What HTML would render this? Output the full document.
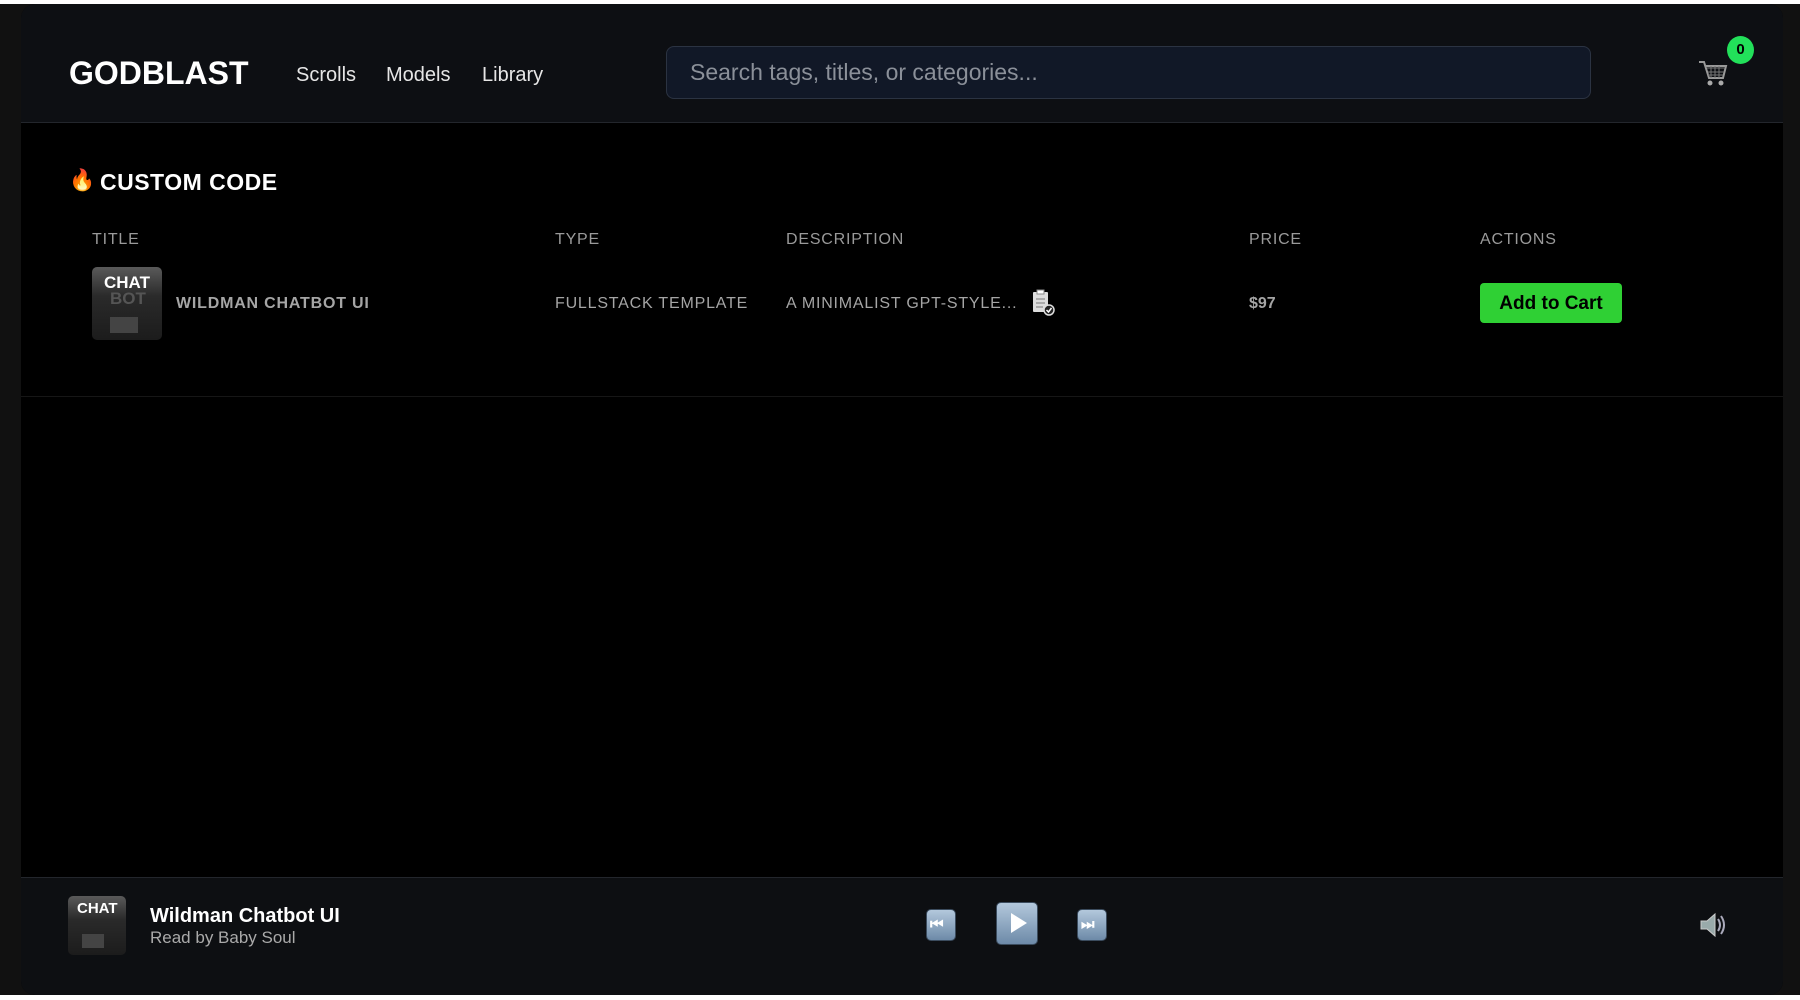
<!DOCTYPE html>
<html><head><meta charset="utf-8"><style>
*{margin:0;padding:0;box-sizing:border-box}
body{width:1800px;height:1000px;background:#111;font-family:"Liberation Sans",sans-serif;position:relative;overflow:hidden}
.abs{position:absolute}
.top{left:0;top:0;width:1800px;height:4px;background:#fff}
.bot{left:0;top:995px;width:1800px;height:5px;background:#fff}
.app{left:21px;top:4px;width:1762px;height:991px;background:#000;border-radius:14px;overflow:hidden}
.hdr{left:0;top:0;width:1762px;height:119px;background:#0d0f13;border-bottom:1px solid #23262c}
.ftr{left:0;top:873px;width:1762px;height:118px;background:#0d0f12;border-top:1px solid #23262c}
.t{white-space:nowrap;line-height:1}
.th{font-size:16px;color:#9a9a9a;letter-spacing:.8px;top:228px}
.td{font-size:16px;color:#a5a5a5;letter-spacing:.8px;top:292px}
.thumb{background:linear-gradient(#5a5a5a,#2a2a2a 40%,#1c1c1c);border-radius:5px;overflow:hidden}
.thumb span{position:absolute;color:#fff;font-weight:bold}
.ctl{background:linear-gradient(#b3c8dc,#6d8aa8);border-radius:5px;border:1px solid #3b4c5e}
</style></head><body>
<div class="abs top"></div>
<div class="abs app">
 <div class="abs hdr">
  <div class="abs t" style="left:48px;top:53px;font-size:32px;font-weight:bold;color:#fff">GODBLAST</div>
  <div class="abs t" style="left:275px;top:61px;font-size:20px;color:#e6e6e6">Scrolls</div>
  <div class="abs t" style="left:365px;top:61px;font-size:20px;color:#e6e6e6">Models</div>
  <div class="abs t" style="left:461px;top:61px;font-size:20px;color:#e6e6e6">Library</div>
  <div class="abs" style="left:645px;top:42px;width:925px;height:53px;background:#111827;border:1px solid #2b3342;border-radius:8px"></div>
  <div class="abs t" style="left:669px;top:57px;font-size:23px;color:#8b9099">Search tags, titles, or categories...</div>
  <svg class="abs" style="left:1676px;top:52px" width="32" height="34" viewBox="0 0 32 34"><path d="M2 6h5l5 16h14l3-12H9" fill="none" stroke="#999" stroke-width="2"/><path d="M10 12h18M11 16h16M11 19h15M14 10v12M18 10v12M22 10v12" stroke="#777" stroke-width="1"/><circle cx="13" cy="27" r="2.5" fill="#aaa"/><circle cx="24" cy="27" r="2.5" fill="#aaa"/></svg>
  <div class="abs" style="left:1706px;top:32px;width:27px;height:28px;border-radius:50%;background:#22e05a;color:#000;font-weight:bold;font-size:15px;text-align:center;line-height:28px">0</div>
 </div>
 <div class="abs t" style="left:48px;top:166px;font-size:21px">🔥</div>
 <div class="abs t" style="left:79px;top:167px;font-size:23px;font-weight:bold;color:#fff;letter-spacing:.5px">CUSTOM CODE</div>
 <div class="abs t th" style="left:71px">TITLE</div>
 <div class="abs t th" style="left:534px">TYPE</div>
 <div class="abs t th" style="left:765px">DESCRIPTION</div>
 <div class="abs t th" style="left:1228px">PRICE</div>
 <div class="abs t th" style="left:1459px">ACTIONS</div>
 <div class="abs thumb" style="left:71px;top:263px;width:70px;height:73px"><span style="left:12px;top:6px;font-size:17px">CHAT</span><span style="left:18px;top:22px;font-size:17px;color:#555">BOT</span><div class="abs" style="left:18px;top:50px;width:28px;height:16px;background:#444"></div></div>
 <div class="abs t td" style="left:155px;font-weight:bold">WILDMAN CHATBOT UI</div>
 <div class="abs t td" style="left:534px">FULLSTACK TEMPLATE</div>
 <div class="abs t td" style="left:765px">A MINIMALIST GPT-STYLE...</div>
 <svg class="abs" style="left:1010px;top:285px" width="26" height="28" viewBox="0 0 26 28"><rect x="2" y="3" width="15" height="20" rx="1" fill="#ddd"/><rect x="6" y="1" width="7" height="4" fill="#fff" stroke="#888"/><path d="M5 10h9M5 14h9M5 18h7" stroke="#777"/><circle cx="18" cy="21" r="5" fill="#222" stroke="#ddd" stroke-width="1.5"/><path d="M15.5 21l2 2 3-4" stroke="#fff" fill="none" stroke-width="1.5"/></svg>
 <div class="abs t td" style="left:1228px;font-weight:bold;letter-spacing:0">$97</div>
 <div class="abs" style="left:1459px;top:279px;width:142px;height:40px;background:#2fd034;border-radius:4px;color:#000;font-weight:bold;font-size:19px;text-align:center;line-height:41px">Add to Cart</div>
 <div class="abs" style="left:0;top:392px;width:1762px;height:1px;background:#161616"></div>
 <div class="abs ftr">
  <div class="abs thumb" style="left:47px;top:18px;width:58px;height:59px"><span style="left:9px;top:4px;font-size:15px">CHAT</span><div class="abs" style="left:14px;top:38px;width:22px;height:14px;background:#444"></div></div>
  <div class="abs t" style="left:129px;top:28px;font-size:20px;font-weight:bold;color:#fff">Wildman Chatbot UI</div>
  <div class="abs t" style="left:129px;top:51px;font-size:17px;color:#aaa">Read by Baby Soul</div>
  <div class="abs ctl" style="left:905px;top:31px;width:30px;height:32px"></div>
  <div class="abs t" style="left:909px;top:39px;font-size:15px;color:#fff;font-weight:bold">⏮</div>
  <div class="abs ctl" style="left:975px;top:24px;width:42px;height:43px"></div>
  <svg class="abs" style="left:986px;top:33px" width="22" height="24"><path d="M4 2L20 12 4 22Z" fill="#fff"/></svg>
  <div class="abs ctl" style="left:1056px;top:31px;width:30px;height:32px"></div>
  <div class="abs t" style="left:1060px;top:39px;font-size:15px;color:#fff;font-weight:bold">⏭</div>
  <svg class="abs" style="left:1676px;top:31px" width="32" height="32" viewBox="0 0 32 32"><path d="M4 12h6l8-7v22l-8-7H4z" fill="#9aa" stroke="#ccc"/><path d="M21 10q4 6 0 12M24 7q6 9 0 18" stroke="#aab" fill="none" stroke-width="2"/></svg>
 </div>
</div>
<div class="abs bot"></div>
</body></html>
